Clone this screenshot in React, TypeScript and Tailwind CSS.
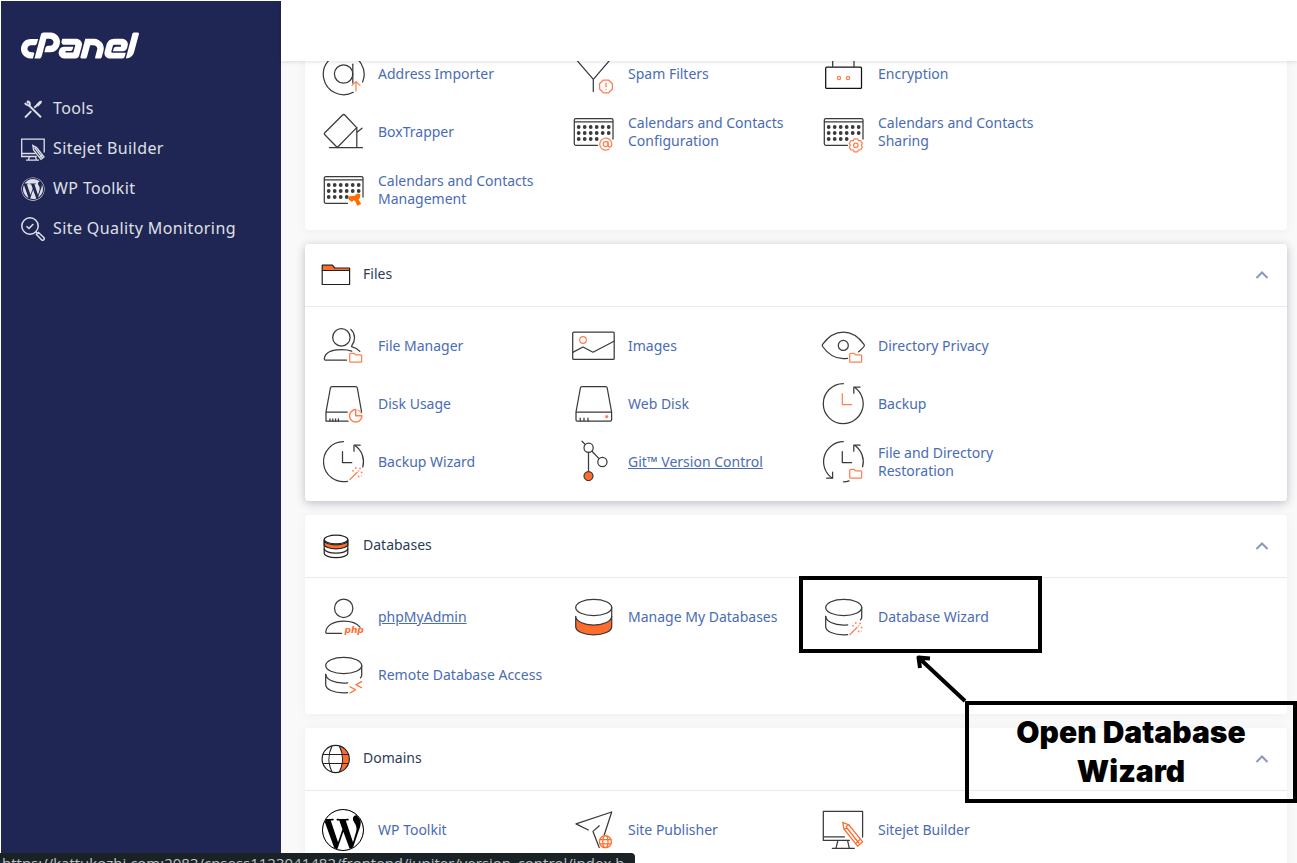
import type { ReactNode } from "react";
import { FaWordpress, FaWordpressSimple } from "react-icons/fa";
import { SiCpanel } from "react-icons/si";

const ORANGE = "#ff7f50";
const SOLID = "#ff6c2c";

function Glyph({ children }: { children: ReactNode }) {
  return (
    <svg
      viewBox="0 0 48 48"
      className="h-12 w-12 shrink-0"
      fill="none"
      stroke="#3a3a3a"
      strokeWidth="1.25"
      strokeLinecap="round"
      strokeLinejoin="round"
      aria-hidden="true"
    >
      {children}
    </svg>
  );
}

function MiniFolder() {
  return (
    <path
      stroke={ORANGE}
      d="M31.5 40.2a.8.8 0 0 1-.8-.8v-7.2a.8.8 0 0 1 .8-.8h3.6l1.4 1.500h5.3a.8.8 0 0 1 .8.8v5.700a.8.8 0 0 1-.8.8z"
    />
  );
}

function Wand() {
  return (
    <g>
      <path stroke={ORANGE} d="M31 41.5 38 34.5" />
      <g fill={ORANGE} stroke="none">
        <circle cx="34" cy="32.8" r=".9" />
        <circle cx="36.8" cy="30" r=".9" />
        <circle cx="41" cy="30.4" r=".9" />
        <circle cx="39.6" cy="33" r=".8" />
        <circle cx="42.6" cy="34.4" r=".9" />
        <circle cx="39.6" cy="38.4" r=".9" />
        <circle cx="42.4" cy="38" r=".6" />
      </g>
    </g>
  );
}

function CalendarBase() {
  const cols = [9.7, 15.7, 21.7, 27.7, 33.7, 39.7];
  return (
    <g>
      <path d="M28.5 37.3H6.8a1.5 1.5 0 0 1-1.5-1.5V12a1.5 1.5 0 0 1 1.5-1.5h35.7A1.5 1.5 0 0 1 44 12v19M5.3 13.8H44" />
      <g fill="#3a3a3a" stroke="none">
        {cols.map((x) => (
          <circle key={`a${x}`} cx={x} cy="19" r="1.9" />
        ))}
        {cols.map((x) => (
          <circle key={`b${x}`} cx={x} cy="25" r="1.9" />
        ))}
        {cols.slice(0, 4).map((x) => (
          <circle key={`c${x}`} cx={x} cy="31" r="1.9" />
        ))}
      </g>
    </g>
  );
}

function CylinderOpen() {
  return (
    <g>
      <ellipse cx="24.7" cy="14.5" rx="18" ry="8.2" />
      <path d="M42.7 14.5V25M42.7 25l-1.2 1.8" />
      <path d="M6.7 23.3c0 5 8 8.7 18 8.7q2 0 4-.2" />
      <path d="M6.7 23.3V33.5c0 5 8 8.3 18 8.3q2 0 4-.2" />
    </g>
  );
}

const glyphs: Record<string, ReactNode> = {
  address: (
    <Glyph>
      <path d="M34.3 42.3A20.4 20.4 0 1 1 43.6 32" />
      <circle cx="24.6" cy="24" r="9.2" />
      <path d="M33.8 14.2V33" />
      <path stroke={ORANGE} d="M37 40.8V31.8M33 35.4l4-3.8 4 3.8" />
    </Glyph>
  ),
  spam: (
    <Glyph>
      <path d="M4 5.8h40.6L24.3 29.3 4 5.8M24.3 29.3v12.3" />
      <path stroke={ORANGE} d="M34.4 30h5.2l3.8 3.8v5.2l-3.8 3.8h-5.2L30.6 39v-5.2z" />
      <path stroke={ORANGE} d="M37 33v3.8M37 39.4v.2" />
    </Glyph>
  ),
  encryption: (
    <Glyph>
      <rect x="6.7" y="17.2" width="35.8" height="21.2" rx="1" stroke="#111111" />
      <path d="M13.7 17V10a6 6 0 0 1 6-6h9.3a6 6 0 0 1 6 6v7" />
      <circle cx="20" cy="28" r="1.6" stroke={ORANGE} />
      <circle cx="29" cy="28" r="1.6" stroke={ORANGE} />
    </Glyph>
  ),
  boxtrapper: (
    <Glyph>
      <path d="M18.3 39.5 5.8 26.8a1.4 1.4 0 0 1 0-2L23.6 7a1.6 1.6 0 0 1 2.2 0L37.7 19.6z" />
      <path d="M10.4 39.7h33M37.8 19.6v20M37.8 24.4l5.2-4.2" />
    </Glyph>
  ),
  calConfig: (
    <Glyph>
      <CalendarBase />
      <g stroke={ORANGE}>
        <path d="M40 41.2A6 6 0 1 1 42.8 36c0 2.2-.9 3-2.1 3-1.1 0-1.7-.8-1.7-2v-3.5" />
        <circle cx="36.7" cy="36" r="2.5" />
      </g>
    </Glyph>
  ),
  calShare: (
    <Glyph>
      <CalendarBase />
      <g stroke={ORANGE}>
        <path d="M35.2 30.8h3.2l1.1 1.8 2.2.1 1.6 2.7-1 1.9 1 1.900-1.6 2.700-2.200.1-1.100 1.800h-3.200l-1.100-1.800-2.200-.1-1.600-2.700 1-1.900-1-1.900 1.600-2.700 2.200-.1z" />
        <circle cx="36.800" cy="37.200" r="2.200" />
      </g>
    </Glyph>
  ),
  calManage: (
    <Glyph>
      <CalendarBase />
      <path
        fill="#ff6c00"
        stroke="none"
        d="M29.300 30.600 35.800 29.800 38 27.400 41.200 28.200 41 32 39.400 33.400 42.300 38 38.200 39.800 36.200 35 34.600 34.200 33 36 29.600 33.600z"
      />
    </Glyph>
  ),
  fileManager: (
    <Glyph>
      <circle cx="22.4" cy="15.4" r="8.7" />
      <path d="M31.8 7.4c4.6 4.2 5 11 1 16.3l-.2.9c3.4.9 6.2 2.4 8.2 4.8" />
      <path d="M27.6 38H6.4a1.1 1.1 0 0 1-1.1-1.3c.8-5.7 7.2-9 17.4-9 4 0 7 .4 10 1.5" />
      <MiniFolder />
    </Glyph>
  ),
  images: (
    <Glyph>
      <rect x="3.7" y="10.2" width="41.5" height="27.2" rx="1" />
      <path d="M3.7 30.4 14 25l10 5.2 21-11" />
      <circle cx="14" cy="18" r="3.3" stroke={ORANGE} />
    </Glyph>
  ),
  privacy: (
    <Glyph>
      <path d="M28.6 36.3c-1.4.3-2.8.4-4.3.4-8.6 0-15.6-5-20.7-12.2a1.8 1.8 0 0 1 0-2.1C9 15 16 10.2 24.3 10.2S39.6 15 45 22.4a1.8 1.8 0 0 1 0 2.1c-1.7 2.3-3.6 3.8-5.4 5.3" />
      <circle cx="24.3" cy="23.4" r="5" />
      <MiniFolder />
    </Glyph>
  ),
  diskUsage: (
    <Glyph>
      <path d="M42.6 32 38.3 8a1.6 1.6 0 0 0-1.6-1.3H13A1.6 1.6 0 0 0 11.4 8L7 32v9.2h22M7 32.2h21.2" />
      <path d="M11 38.8v2.4M13.8 38.8v2.4M16.6 38.8v2.4M19.4 38.8v2.4" />
      <path stroke={ORANGE} strokeWidth="1.5" d="M36.7 29.6a6.200 6.200 0 1 0 6.200 6.200h-6.200z" />
      <path stroke={ORANGE} strokeWidth="1" d="M38.800 30a6 6 0 0 1 3.700 3.600" />
    </Glyph>
  ),
  webDisk: (
    <Glyph>
      <path d="M7 32 11.4 8A1.6 1.6 0 0 1 13 6.7h23.6A1.6 1.6 0 0 1 38.2 8l4.4 24v7.8a1.3 1.3 0 0 1-1.3 1.3h-33A1.3 1.3 0 0 1 7 39.8zM7 32h35.6" />
      <path d="M11.2 38.2v2.6M15 38.2v2.6M19 38.2v2.6" />
      <circle cx="37.7" cy="36.6" r="1.6" fill={ORANGE} stroke="none" />
    </Glyph>
  ),
  backup: (
    <Glyph>
      <path d="M24.3 3.7a20 20 0 1 0 0 40 20 20 0 0 0 11.6-36.2" />
      <path d="M41 7.2h-6.2v6" />
      <path stroke={ORANGE} d="M23.3 13.5v11h9.3" />
    </Glyph>
  ),
  backupWizard: (
    <Glyph>
      <path d="M24.5 3.7a20 20 0 1 0 4 39.6M36.1 7.5A20 20 0 0 1 43.8 29" />
      <path d="M41.2 7.2H35v6" />
      <path d="M23.5 13.5v11h9.3" />
      <Wand />
    </Glyph>
  ),
  git: (
    <Glyph>
      <path d="M13 3.2 16.4 6.6M23 13.2l7 7.4M19.5 14.4v19" />
      <circle cx="19.6" cy="9.8" r="4.6" />
      <circle cx="33.4" cy="24" r="4.6" />
      <circle cx="19.5" cy="38" r="4.5" fill={SOLID} />
    </Glyph>
  ),
  restoration: (
    <Glyph>
      <path d="M24.3 3.7A20 20 0 0 0 13 40M36 7.5a20 20 0 0 1 7.6 21.3M24.5 43.8q3-.2 5.6-1" />
      <path d="M41 7.2h-6.2v6M7.6 40.2h6v-6" />
      <path d="M23.3 13.5v11h9.3" />
      <MiniFolder />
    </Glyph>
  ),
  php: (
    <Glyph>
      <circle cx="24.7" cy="15.3" r="9.2" />
      <path d="M22.5 40.3H7.8a1.1 1.1 0 0 1-1.1-1.3c.8-6.6 7.8-11 18-11 7.6 0 13.3 2.2 16.3 6.2" />
      <text
        x="25.5"
        y="40"
        fill={SOLID}
        stroke="none"
        fontSize="9"
        fontWeight="700"
        fontStyle="italic"
        fontFamily="'DejaVu Sans', sans-serif"
      >
        php
      </text>
    </Glyph>
  ),
  manageDb: (
    <Glyph>
      <path
        fill={SOLID}
        d="M6.7 23.3c0 5 8 8.7 18 8.7s18-3.7 18-8.7v10.2c0 5-8 8.3-18 8.3s-18-3.3-18-8.3z"
      />
      <path d="M42.7 14.5v9" />
      <ellipse cx="24.7" cy="14.5" rx="18" ry="8.2" fill="#ffffff" />
    </Glyph>
  ),
  dbWizard: (
    <Glyph>
      <CylinderOpen />
      <Wand />
    </Glyph>
  ),
  remoteDb: (
    <Glyph>
      <CylinderOpen />
      <path stroke={SOLID} d="M31 35.8l5.6 3-5.6 3.2M42.6 30.6l-5.6 3.1 5.6 3.1" />
    </Glyph>
  ),
  wp: (
    <span className="flex h-12 w-12 shrink-0 items-center justify-center text-black">
      <span className="flex h-[42px] w-[42px] items-center justify-center overflow-hidden rounded-full border border-black">
        <FaWordpressSimple size={46} className="shrink-0" aria-hidden="true" />
      </span>
    </span>
  ),
  publisher: (
    <Glyph>
      <path d="M19.3 24 7 17.9 42.7 6 35.2 29M30.3 19.8 24 25.4l6.2 16" />
      <g stroke={SOLID}>
        <circle cx="36.4" cy="35.7" r="6" />
        <ellipse cx="36.4" cy="35.7" rx="2.6" ry="6" />
        <path d="M30.8 33.6h11.2M30.8 37.8h11.2" />
      </g>
    </Glyph>
  ),
  sitejet: (
    <Glyph>
      <path d="M43.6 31V5.4H4.3v29h26M4.3 30.8h21.2M18.8 34.6 17 42.2M28.6 34.6l1.7 7.600M13.3 42.3h22" />
      <g stroke={SOLID}>
        <path d="M23.7 16.4 30 19l13.6 16.8-5 4.4L25 23z" />
        <path d="M25 23l2.3-.7.3-2.3 2.4-1M27.5 21.5l12.3 15.5M36.4 37.6l5-4.4" />
      </g>
    </Glyph>
  ),
};

function HeadGlyph({ children }: { children: ReactNode }) {
  return (
    <svg
      viewBox="0 0 30 30"
      className="h-[30px] w-[30px] shrink-0"
      fill="none"
      stroke="#222222"
      strokeWidth="1.2"
      strokeLinejoin="round"
      aria-hidden="true"
    >
      {children}
    </svg>
  );
}

const filesHead = (
  <HeadGlyph>
    <path fill={SOLID} d="M1.2 10.5V5.2h10.2l2.4 2.8h14.8v2.5z" />
    <path d="M1.2 10.5h27.4v14H1.2z" />
  </HeadGlyph>
);

const databasesHead = (
  <HeadGlyph>
    <path d="M3.2 8.500v13.800c0 2.400 5.300 4.300 11.800 4.300s11.800-1.900 11.800-4.300V8.500" />
    <path d="M3.2 17.8c0 2.4 5.3 4.3 11.8 4.3s11.8-1.9 11.8-4.3" />
    <path
      fill={SOLID}
      d="M3.2 9.5c0 2.4 5.3 4.3 11.8 4.3s11.8-1.9 11.8-4.3v4c0 2.4-5.3 4.3-11.8 4.3S3.2 15.9 3.2 13.5z"
    />
    <ellipse cx="15" cy="8.5" rx="11.8" ry="4.3" fill="#ffffff" />
  </HeadGlyph>
);

const domainsHead = (
  <HeadGlyph>
    <path fill={SOLID} stroke="none" d="M18.4 2c4 8 4 18 0 26A13.600 13.600 0 0 0 18.400 2z" />
    <circle cx="14.7" cy="15" r="13.6" />
    <path d="M1.8 10.5h25.8M1.8 19.5h25.8M11 2c-4 8-4 18 0 26M18.4 2c4 8 4 18 0 26" />
  </HeadGlyph>
);

type Item = { icon: string; label: string; underlined?: boolean; marked?: boolean };

const email: Item[] = [
  { icon: "address", label: "Address Importer" },
  { icon: "spam", label: "Spam Filters" },
  { icon: "encryption", label: "Encryption" },
  { icon: "boxtrapper", label: "BoxTrapper" },
  { icon: "calConfig", label: "Calendars and Contacts Configuration" },
  { icon: "calShare", label: "Calendars and Contacts Sharing" },
  { icon: "calManage", label: "Calendars and Contacts Management" },
];

const files: Item[] = [
  { icon: "fileManager", label: "File Manager" },
  { icon: "images", label: "Images" },
  { icon: "privacy", label: "Directory Privacy" },
  { icon: "diskUsage", label: "Disk Usage" },
  { icon: "webDisk", label: "Web Disk" },
  { icon: "backup", label: "Backup" },
  { icon: "backupWizard", label: "Backup Wizard" },
  { icon: "git", label: "Git™ Version Control", underlined: true },
  { icon: "restoration", label: "File and Directory Restoration" },
];

const databases: Item[] = [
  { icon: "php", label: "phpMyAdmin", underlined: true },
  { icon: "manageDb", label: "Manage My Databases" },
  { icon: "dbWizard", label: "Database Wizard", marked: true },
  { icon: "remoteDb", label: "Remote Database Access" },
];

const domains: Item[] = [
  { icon: "wp", label: "WP Toolkit" },
  { icon: "publisher", label: "Site Publisher" },
  { icon: "sitejet", label: "Sitejet Builder" },
];

function Annotation() {
  return (
    <div className="pointer-events-none">
      <div className="absolute -top-3 -left-5 z-10 h-[77px] w-[243px] border-4 border-black" />
      <svg
        viewBox="0 0 54 50"
        className="absolute top-[66px] left-[96px] z-10 h-[50px] w-[54px]"
        fill="none"
        stroke="#000000"
        strokeWidth="4"
        strokeLinejoin="round"
        aria-hidden="true"
      >
        <path d="M50 47 4 4M15 4.5 3.5 3.5 5 14" />
      </svg>
      <div className="absolute top-[113px] left-[146px] z-10 w-[332px] border-4 border-black py-2 text-center font-['Inter',sans-serif] text-[30px] leading-[39px] font-black text-black">
        Open Database
        <br />
        Wizard
      </div>
    </div>
  );
}

function ItemGrid({ items }: { items: Item[] }) {
  return (
    <ul className="grid grid-cols-[repeat(auto-fill,250px)] px-3.5 py-2.5">
      {items.map((item) => (
        <li key={item.label} className="relative h-[58px]">
          <a
            href="#"
            className={
              item.underlined
                ? "flex h-full items-center gap-[11px] pr-6 text-sm leading-[18px] text-[#4a6cb3] underline"
                : "flex h-full items-center gap-[11px] pr-6 text-sm leading-[18px] text-[#4a6cb3]"
            }
          >
            {glyphs[item.icon]}
            <span>{item.label}</span>
          </a>
          {item.marked && <Annotation />}
        </li>
      ))}
    </ul>
  );
}

function Section({
  title,
  icon,
  items,
  raised,
}: {
  title: string;
  icon: ReactNode;
  items: Item[];
  raised?: boolean;
}) {
  return (
    <section
      className={
        raised
          ? "rounded bg-white shadow-[0_2px_10px_rgba(40,50,80,0.3)]"
          : "rounded bg-white shadow-[0_1px_10px_rgba(0,0,0,0.05)]"
      }
    >
      <header className="flex h-[63px] items-center gap-3 border-b border-[#e8eaf3] px-4">
        {icon}
        <h2 className="flex-1 pb-0.5 text-sm text-[#2b3c55]">{title}</h2>
        <button type="button" aria-label={`Collapse ${title}`} className="text-[#8b97bd]">
          <svg viewBox="0 0 18 18" className="h-[18px] w-[18px]" fill="none" stroke="currentColor" strokeWidth="2">
            <path d="M3.5 12 9 6.5 14.5 12" />
          </svg>
        </button>
      </header>
      <ItemGrid items={items} />
    </section>
  );
}

function SideGlyph({ children }: { children: ReactNode }) {
  return (
    <svg
      viewBox="0 0 24 24"
      className="h-6 w-6"
      fill="none"
      stroke="currentColor"
      strokeWidth="1.3"
      aria-hidden="true"
    >
      {children}
    </svg>
  );
}

const nav = [
  {
    label: "Tools",
    icon: (
      <SideGlyph>
        <path strokeWidth="1.9" d="M7.5 8 20 20.3M4 20.5l6.3-6.3" />
        <path strokeWidth="1.9" d="M13.2 10.8 16.3 8" />
        <path fill="currentColor" stroke="none" d="M15 7.6 18.6 4l2.3-.2-.3 2.3L17 9.7z" />
        <path strokeWidth="1.8" d="M6.3 4.2c1.8.2 3 1.6 2.6 3.6-1.9 1-4 .2-5-1.8M6.3 4.2l.6 2.4" />
      </SideGlyph>
    ),
  },
  {
    label: "Sitejet Builder",
    icon: (
      <SideGlyph>
        <path d="M23.2 15.5V2.2H.7v17.3h15M.7 16.5h14M8.5 19.5l-1 3.3M14.5 19.5l.8 3.3M5 23.2h13" />
        <path d="M11.8 8.5l.8 4.5 7.4 9.4 3-2.4-7.4-9.5zM13.5 10.5 21.5 21.2M18.5 20.3l3-2.4" />
      </SideGlyph>
    ),
  },
  { label: "WP Toolkit", icon: <FaWordpress size={24} aria-hidden="true" /> },
  {
    label: "Site Quality Monitoring",
    icon: (
      <SideGlyph>
        <circle cx="9" cy="9" r="8.2" strokeWidth="1.5" />
        <path strokeWidth="1.5" d="M5.5 9.2 8 11.5l4.3-4.6M14.8 14.8l1.6 1.6" />
        <path strokeWidth="1.5" d="M15.5 17.5 17.5 15.5 22.8 20.5a1.6 1.6 0 0 1 0 2.3 1.6 1.6 0 0 1-2.3 0z" />
      </SideGlyph>
    ),
  },
];

export default function App() {
  return (
    <div className="relative flex h-screen overflow-hidden bg-white font-['Noto_Sans',sans-serif]">
      <aside className="mt-px ml-px w-[280px] shrink-0 bg-[#1f2653] px-5 pt-[31px]">
        <SiCpanel viewBox="0 9.3 24 5.4" className="h-[27px] w-[118px] text-white" role="img" aria-label="cPanel" />
        <nav className="mt-[29px]">
          <ul>
            {nav.map((entry) => (
              <li key={entry.label}>
                <a href="#" className="flex h-10 items-center gap-2 text-base tracking-wide text-[#dfe0e6]">
                  <span className="pt-0.5">{entry.icon}</span>
                  {entry.label}
                </a>
              </li>
            ))}
          </ul>
        </nav>
      </aside>

      <div className="flex min-w-0 flex-1 flex-col">
        <header className="relative z-20 h-[61px] shrink-0 bg-white shadow-[0_1px_4px_rgba(0,0,0,0.12)]" />
        <main className="min-h-0 flex-1 overflow-hidden bg-[#f9f9f9] pr-2.5 pl-6">
          <div className="-mt-[26px] flex flex-col gap-3.5">
            <section className="rounded bg-white pb-px shadow-[0_1px_10px_rgba(0,0,0,0.05)]">
              <ItemGrid items={email} />
            </section>
            <Section title="Files" icon={filesHead} items={files} raised />
            <Section title="Databases" icon={databasesHead} items={databases} />
            <Section title="Domains" icon={domainsHead} items={domains} />
          </div>
        </main>
      </div>

      <div className="absolute bottom-0 left-0 z-30 h-2.5 w-[635px] overflow-hidden rounded-tr bg-[#1b2226] px-0.5 font-['Open_Sans',sans-serif] text-[15px] leading-5 whitespace-nowrap text-[#b9c0c4]">
        https://kattukozhi.com:2083/cpsess1123041482/frontend/jupiter/version_control/index.h…
      </div>
    </div>
  );
}
